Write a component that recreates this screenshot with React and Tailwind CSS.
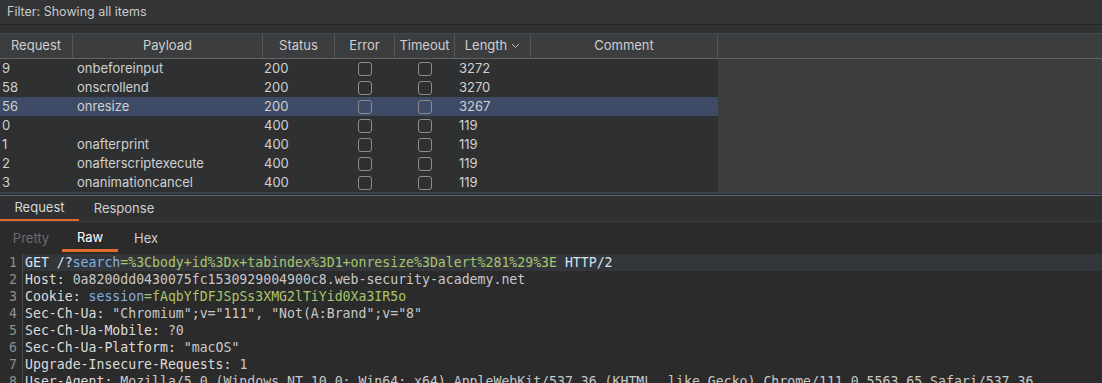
import React from "react";

const rows = [
  { id: "9", payload: "onbeforeinput", status: "200", length: "3272" },
  { id: "58", payload: "onscrollend", status: "200", length: "3270" },
  { id: "56", payload: "onresize", status: "200", length: "3267", selected: true },
  { id: "0", payload: "", status: "400", length: "119" },
  { id: "1", payload: "onafterprint", status: "400", length: "119" },
  { id: "2", payload: "onafterscriptexecute", status: "400", length: "119" },
  { id: "3", payload: "onanimationcancel", status: "400", length: "119" },
];

const Check = () => (
  <div className="w-[14px] h-[14px] rounded-[3px] border border-[#8c8c8c]" />
);

const HeaderCell = ({ className = "", children }) => (
  <div
    className={`flex items-center justify-center border-r border-[#555658] h-full ${className}`}>
    {children}
  </div>
);

const Key = ({ children }) => <span className="text-[#dcdcdc]">{children}</span>;
const Val = ({ children }) => <span className="text-[#c8c8c8]">{children}</span>;
const Param = ({ children }) => <span className="text-[#86aee6]">{children}</span>;
const Green = ({ children }) => <span className="text-[#a9c56c]">{children}</span>;

const lines = [
  <>
    <span className="text-[#d3e3f3]">GET /?</span>
    <Param>search</Param>
    <Green>=%3Cbody+id%3Dx+tabindex%3D1+onresize%3Dalert%281%29%3E</Green>
    <span className="text-[#d3e3f3]"> HTTP/2</span>
  </>,
  <>
    <Key>Host: </Key>
    <Val>0a8200dd0430075fc1530929004900c8.web-security-academy.net</Val>
  </>,
  <>
    <Key>Cookie: </Key>
    <Param>session</Param>
    <Green>=fAqbYfDFJSpSs3XMG2lTiYid0Xa3IR5o</Green>
  </>,
  <>
    <Key>Sec-Ch-Ua: </Key>
    <Val>"Chromium";v="111", "Not(A:Brand";v="8"</Val>
  </>,
  <>
    <Key>Sec-Ch-Ua-Mobile: </Key>
    <Val>?0</Val>
  </>,
  <>
    <Key>Sec-Ch-Ua-Platform: </Key>
    <Val>"macOS"</Val>
  </>,
  <>
    <Key>Upgrade-Insecure-Requests: </Key>
    <Val>1</Val>
  </>,
  <>
    <Key>User-Agent: </Key>
    <Val>
      Mozilla/5.0 (Windows NT 10.0; Win64; x64) AppleWebKit/537.36 (KHTML, like Gecko)
      Chrome/111.0.5563.65 Safari/537.36
    </Val>
  </>,
];

export default function App() {
  return (
    <div
      className="w-[1102px] h-[383px] overflow-hidden bg-[#2b2b2b] text-[13px] text-[#d2d2d2] flex flex-col"
      style={{ fontFamily: "Inter, 'Noto Sans', sans-serif" }}>
      {/* filter bar */}
      <div className="h-[25px] shrink-0 bg-[#333436] border-b border-[#232425] flex items-center px-[7px] text-[12.5px] text-[#c9c9c9]">
        Filter: Showing all items
      </div>
      <div className="h-[8px] shrink-0 bg-[#313234]" />

      {/* table */}
      <div className="shrink-0 border-t border-[#3e4656] bg-[#3c3d3f]">
        <div className="h-[25px] flex border-b border-[#626365] text-[#cfcfcf]">
          <HeaderCell className="w-[73px]">Request</HeaderCell>
          <HeaderCell className="w-[190px]">Payload</HeaderCell>
          <HeaderCell className="w-[72px]">Status</HeaderCell>
          <HeaderCell className="w-[60px]">Error</HeaderCell>
          <HeaderCell className="w-[60px]">Timeout</HeaderCell>
          <HeaderCell className="w-[76px] gap-1">
            Length
            <svg width="9" height="6" viewBox="0 0 9 6" fill="none">
              <path d="M1 1l3.5 3.5L8 1" stroke="#bdbdbd" strokeWidth="1" />
            </svg>
          </HeaderCell>
          <HeaderCell className="w-[187px]">Comment</HeaderCell>
        </div>
        <div className="flex">
          <div className="w-[718px] bg-[#2f3032]">
            {rows.map((r) => (
              <div
                key={r.id}
                className={`h-[19px] flex items-center text-[#d0d0d0] ${
                  r.selected ? "bg-[#3e4b67]" : ""
                }`}>
                <div className="w-[73px] pl-[2px]">{r.id}</div>
                <div className="w-[190px] pl-[4px]">{r.payload}</div>
                <div className="w-[72px] pl-[1px]">{r.status}</div>
                <div className="w-[60px] flex justify-center">
                  <Check />
                </div>
                <div className="w-[60px] flex justify-center">
                  <Check />
                </div>
                <div className="w-[76px] pl-[4px]">{r.length}</div>
              </div>
            ))}
          </div>
          <div className="flex-1 bg-[#3c3d3f]" />
        </div>
      </div>

      {/* splitter */}
      <div className="h-[2px] shrink-0 bg-[#3b4250]" />
      <div className="h-[1px] shrink-0 bg-[#2c2d2f]" />
      <div className="h-[1px] shrink-0 bg-[#5e5f61]" />

      {/* request / response tabs */}
      <div className="h-[26px] shrink-0 bg-[#2f3032] flex border-b border-[#3c3d3f]">
        <div className="w-[79px] flex items-center justify-center border-b-2 border-[#e0692e] text-[#d8d8d8]">
          Request
        </div>
        <div className="w-[90px] flex items-center justify-center text-[#cfcfcf]">
          Response
        </div>
      </div>

      {/* pretty / raw / hex */}
      <div className="h-[30px] shrink-0 bg-[#2b2b2b] flex">
        <div className="w-[62px] flex items-center justify-center pt-[4px] text-[#6c6c6c]">
          Pretty
        </div>
        <div className="w-[56px] flex items-center justify-center pt-[4px] border-b-[3px] border-[#e0692e] text-white">
          Raw
        </div>
        <div className="w-[56px] flex items-center justify-center pt-[4px] text-[#cfcfcf]">
          Hex
        </div>
      </div>

      {/* editor */}
      <div
        className="flex-1 pt-[2px] text-[13.2px] whitespace-pre"
        style={{ fontFamily: "'DejaVu Sans Mono', 'Liberation Mono', monospace" }}>
        {lines.map((l, i) => (
          <div key={i} className={`h-[17px] flex items-center ${i === 0 ? "bg-[#33373b]" : ""}`}>
            <div className="w-[22px] shrink-0 pr-[5px] text-right text-[#8f8f8f] bg-[#2b2b2b] h-full flex items-center justify-end">
              {i + 1}
            </div>
            <div className="h-full border-l border-[#4a4b4d] pl-[2px] flex items-center">{l}</div>
          </div>
        ))}
      </div>
    </div>
  );
}
